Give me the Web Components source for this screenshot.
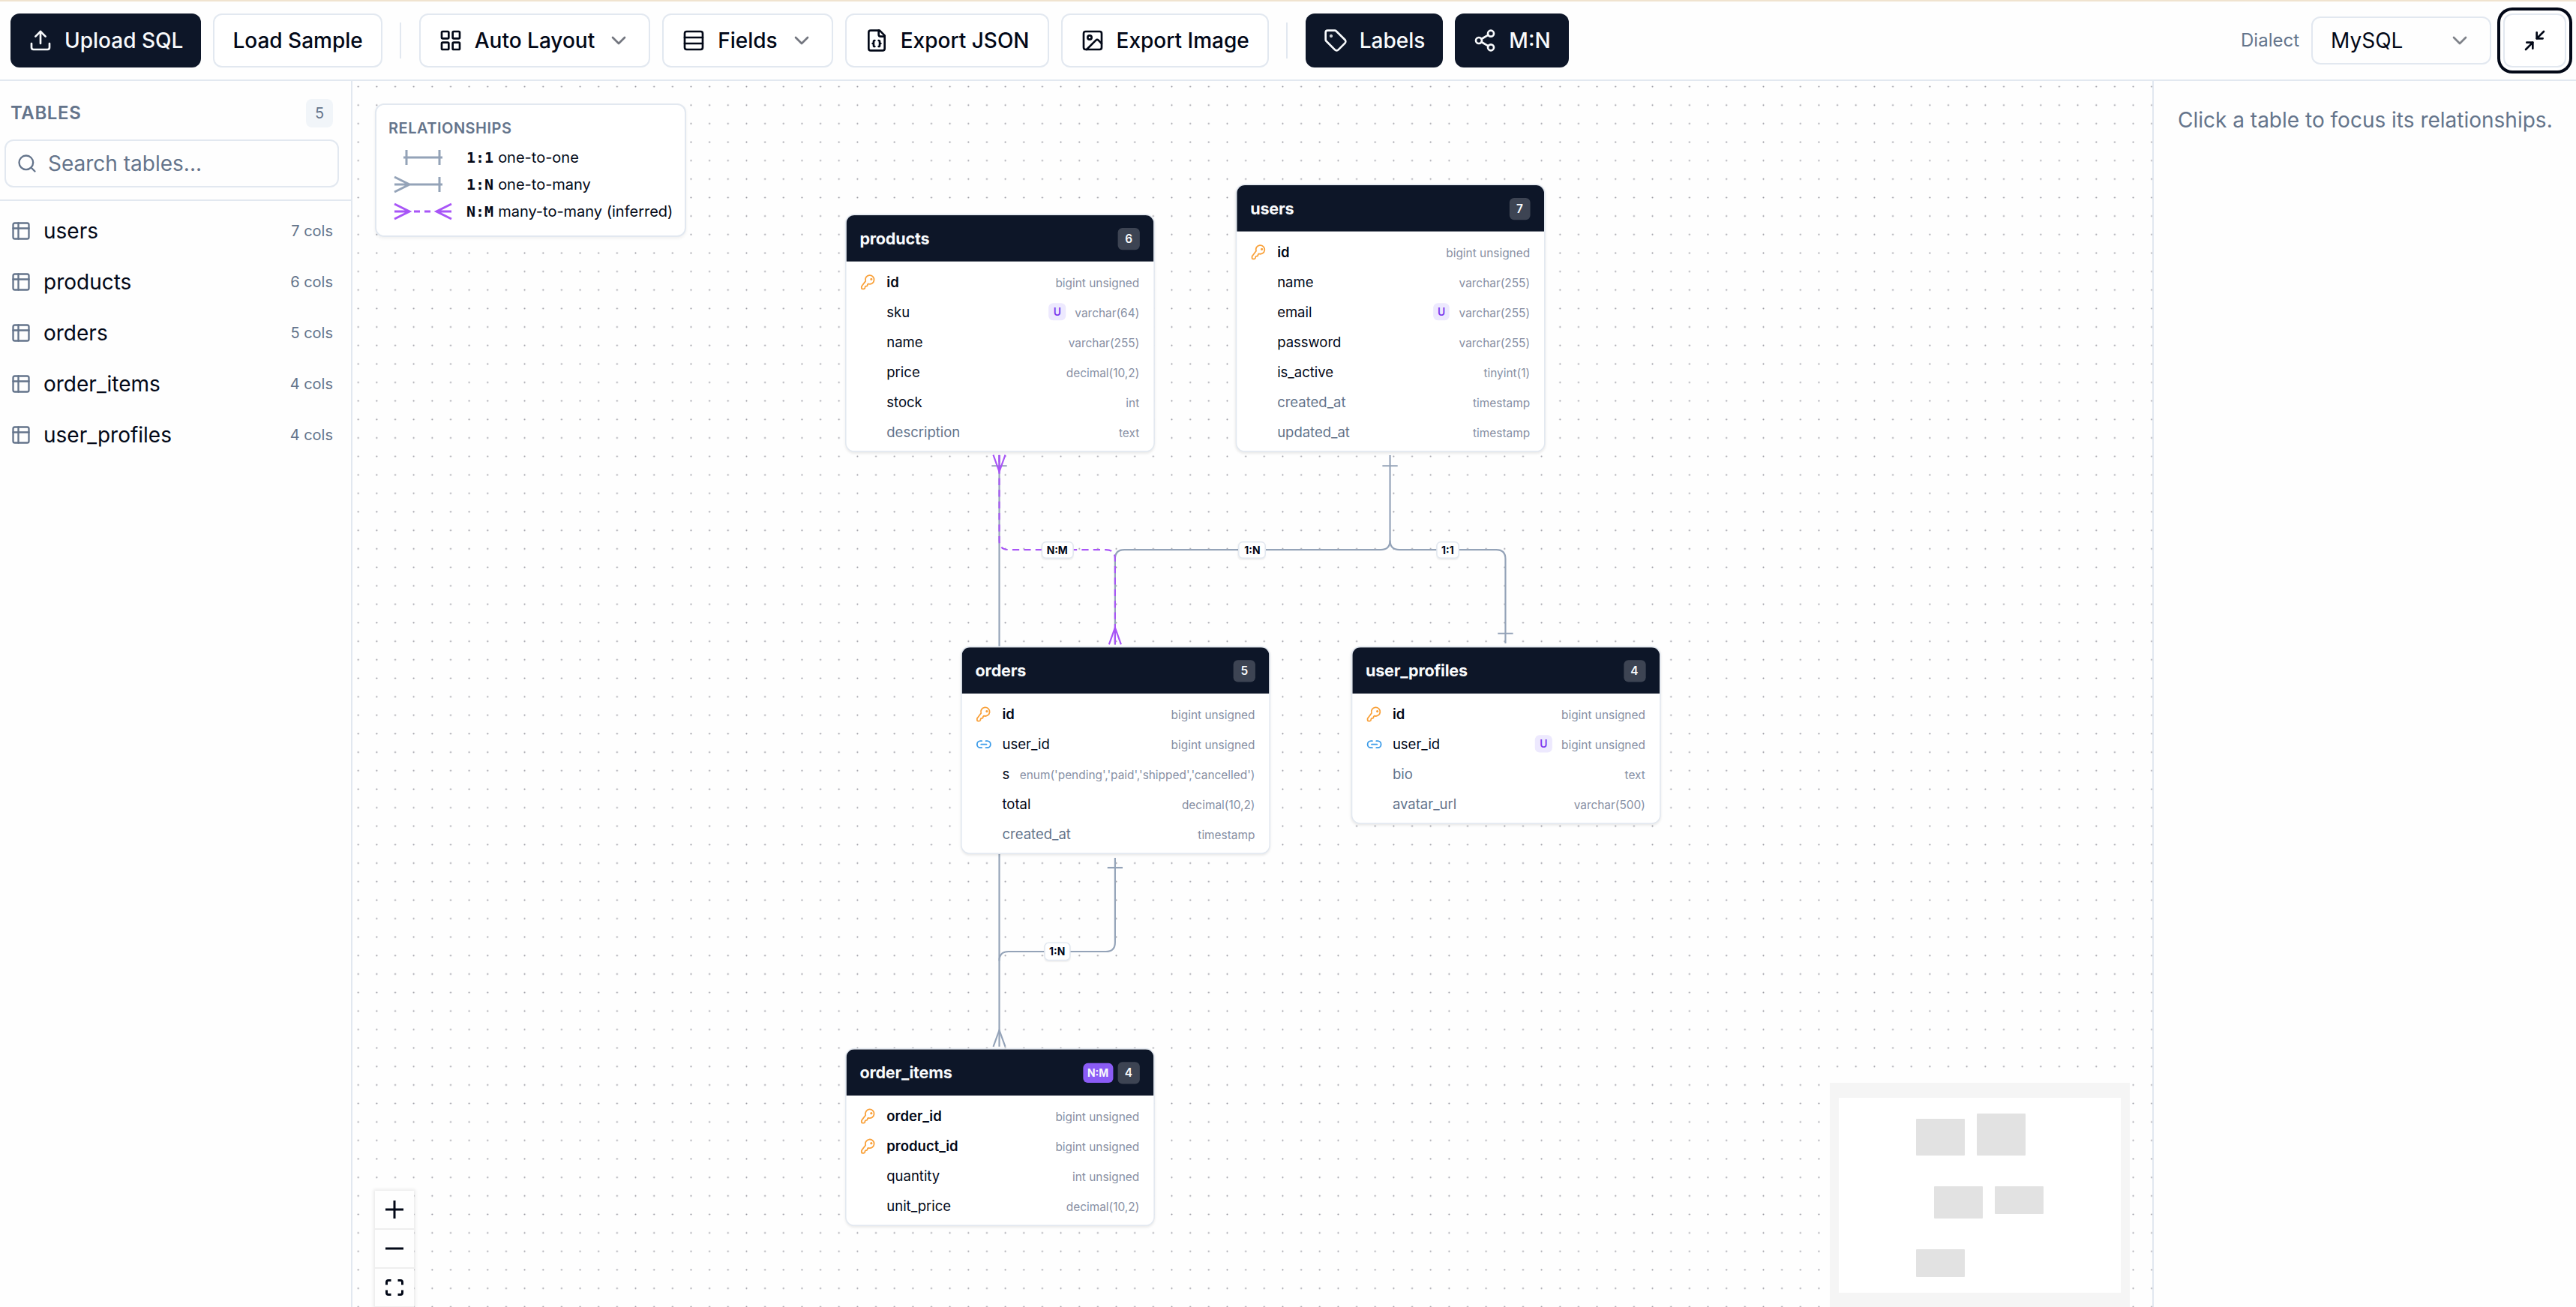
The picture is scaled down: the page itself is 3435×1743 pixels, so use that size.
<!DOCTYPE html>
<html lang="en">
<head>
<meta charset="UTF-8">
<title>SQL Schema Visualizer</title>
<style>
  :root {
    --fg: #020817;
    --muted: #64748b;
    --border: #e2e8f0;
    --primary: #0d1628;
    --edge: #94a3b8;
    --inferred: #a855f7;
  }
  body {
    margin: 0;
    height: 1743px;
    overflow: hidden;
    background: #fefefe;
    color: var(--fg);
    font-family: Inter, "Liberation Sans", sans-serif;
    font-size: 28px;
    line-height: 40px;
  }
</style>
</head>
<body>
<schema-app></schema-app>

<script>
const ICONS = {
  upload: '<path d="M21 15v4a2 2 0 0 1-2 2H5a2 2 0 0 1-2-2v-4"/><path d="m17 8-5-5-5 5"/><path d="M12 3v12"/>',
  grid: '<rect width="7" height="7" x="3" y="3" rx="1"/><rect width="7" height="7" x="14" y="3" rx="1"/><rect width="7" height="7" x="14" y="14" rx="1"/><rect width="7" height="7" x="3" y="14" rx="1"/>',
  rows: '<rect width="18" height="18" x="3" y="3" rx="2"/><path d="M21 9H3"/><path d="M21 15H3"/>',
  json: '<path d="M15 2H6a2 2 0 0 0-2 2v16a2 2 0 0 0 2 2h12a2 2 0 0 0 2-2V7Z"/><path d="M14 2v4a2 2 0 0 0 2 2h4"/><path d="M10 12a1 1 0 0 0-1 1v1a1 1 0 0 1-1 1 1 1 0 0 1 1 1v1a1 1 0 0 0 1 1"/><path d="M14 18a1 1 0 0 0 1-1v-1a1 1 0 0 1 1-1 1 1 0 0 1-1-1v-1a1 1 0 0 0-1-1"/>',
  image: '<rect width="18" height="18" x="3" y="3" rx="2"/><circle cx="9" cy="9" r="2"/><path d="m21 15-3.086-3.086a2 2 0 0 0-2.828 0L6 21"/>',
  tag: '<path d="M12.586 2.586A2 2 0 0 0 11.172 2H4a2 2 0 0 0-2 2v7.172a2 2 0 0 0 .586 1.414l8.704 8.704a2.426 2.426 0 0 0 3.42 0l6.58-6.58a2.426 2.426 0 0 0 0-3.42z"/><circle cx="7.5" cy="7.5" r=".5" fill="currentColor"/>',
  share: '<circle cx="18" cy="5" r="3"/><circle cx="6" cy="12" r="3"/><circle cx="18" cy="19" r="3"/><path d="m8.59 13.51 6.83 3.98"/><path d="m15.41 6.51-6.82 3.98"/>',
  chevron: '<path d="m6 9 6 6 6-6"/>',
  minimize: '<path d="m14 10 7-7"/><path d="M20 10h-6V4"/><path d="m3 21 7-7"/><path d="M4 14h6v6"/>',
  search: '<circle cx="11" cy="11" r="8"/><path d="m21 21-4.3-4.3"/>',
  table: '<path d="M9 3v18"/><rect width="18" height="18" x="3" y="3" rx="2"/><path d="M21 9H3"/>',
  key: '<path d="M2.586 17.414A2 2 0 0 0 2 18.828V20.5a1.5 1.5 0 0 0 1.5 1.5h1.7a2 2 0 0 0 1.8-1.6l.2-1.2a1.6 1.6 0 0 1 1.4-1.3l.8-.1a1.6 1.6 0 0 0 1.4-1.4l.1-.7a1.6 1.6 0 0 1 .7-1.1l.4-.3a6.5 6.5 0 1 0-4-4z"/><circle cx="16.5" cy="7.5" r=".8" fill="currentColor"/>',
  link: '<path d="M9 17H7A5 5 0 0 1 7 7h2"/><path d="M15 7h2a5 5 0 1 1 0 10h-2"/><path d="M8 12h8"/>'
};

const TABLES = [
  { name: 'users', x: 337.7, y: -0.6, cols: [
    ['id', 'bigint unsigned', 'pk'],
    ['name', 'varchar(255)'],
    ['email', 'varchar(255)', 'unique'],
    ['password', 'varchar(255)'],
    ['is_active', 'tinyint(1)'],
    ['created_at', 'timestamp', 'nullable'],
    ['updated_at', 'timestamp', 'nullable']
  ] },
  { name: 'products', x: -0.4, y: 25.4, cols: [
    ['id', 'bigint unsigned', 'pk'],
    ['sku', 'varchar(64)', 'unique'],
    ['name', 'varchar(255)'],
    ['price', 'decimal(10,2)'],
    ['stock', 'int'],
    ['description', 'text', 'nullable']
  ] },
  { name: 'orders', x: 99.7, y: 399.4, cols: [
    ['id', 'bigint unsigned', 'pk'],
    ['user_id', 'bigint unsigned', 'fk'],
    ['s', "enum('pending','paid','shipped','cancelled')"],
    ['total', 'decimal(10,2)'],
    ['created_at', 'timestamp', 'nullable']
  ] },
  { name: 'order_items', x: -0.4, y: 747.3, junction: true, cols: [
    ['order_id', 'bigint unsigned', 'pk'],
    ['product_id', 'bigint unsigned', 'pk'],
    ['quantity', 'int unsigned'],
    ['unit_price', 'decimal(10,2)']
  ] },
  { name: 'user_profiles', x: 437.5, y: 399.4, cols: [
    ['id', 'bigint unsigned', 'pk'],
    ['user_id', 'bigint unsigned', 'fk unique'],
    ['bio', 'text', 'nullable'],
    ['avatar_url', 'varchar(500)', 'nullable']
  ] }
];

class UiIcon extends HTMLElement {
  constructor() {
    super();
    this.attachShadow({ mode: 'open' });
  }

  connectedCallback() {
    const size = this.getAttribute('size') || 32;
    this.shadowRoot.innerHTML = `
      <style>
        :host { display: block; flex: none; width: ${size}px; height: ${size}px; }
        svg { display: block; }
      </style>
      <svg width="${size}" height="${size}" viewBox="0 0 24 24" fill="none" stroke="currentColor" stroke-width="2" stroke-linecap="round" stroke-linejoin="round">${ICONS[this.getAttribute('name')]}</svg>
    `;
  }
}

class UiButton extends HTMLElement {
  constructor() {
    super();
    this.attachShadow({ mode: 'open' });
  }

  connectedCallback() {
    const icon = this.getAttribute('icon');
    this.shadowRoot.innerHTML = `
      <style>
        :host {
          display: flex;
          align-items: center;
          justify-content: center;
          gap: 16px;
          box-sizing: border-box;
          height: 72px;
          padding: 0 24px;
          border: 2px solid var(--border);
          border-radius: 12px;
          background: #fff;
          font-weight: 500;
          white-space: nowrap;
        }
        :host([primary]) {
          border: 0;
          background: var(--primary);
          color: #f8fafc;
        }
        :host([focused]) {
          width: 84px;
          padding: 0;
          box-shadow: 0 0 0 4px #fff, 0 0 0 8px var(--fg);
        }
        .chevron { opacity: 0.55; }
      </style>
      ${icon ? `<ui-icon name="${icon}"></ui-icon>` : ''}
      <slot></slot>
      ${this.hasAttribute('menu') ? '<ui-icon class="chevron" name="chevron"></ui-icon>' : ''}
    `;
  }
}

class AppToolbar extends HTMLElement {
  constructor() {
    super();
    this.attachShadow({ mode: 'open' });
  }

  connectedCallback() {
    this.shadowRoot.innerHTML = `
      <style>
        :host {
          display: flex;
          align-items: center;
          gap: 16px;
          box-sizing: border-box;
          height: 108px;
          padding: 0 13px 0 14px;
          border-top: 2px solid #f0e3cf;
          border-bottom: 2px solid var(--border);
        }
        .sep { width: 2px; height: 48px; margin: 0 7.5px; background: var(--border); }
        .dialect { margin-left: auto; font-size: 24px; color: var(--muted); }
        .select {
          display: flex;
          align-items: center;
          justify-content: space-between;
          box-sizing: border-box;
          width: 240px;
          height: 64px;
          padding: 0 24px;
          border: 2px solid var(--border);
          border-radius: 12px;
        }
        .select ui-icon { opacity: 0.5; }
      </style>
      <ui-button primary icon="upload">Upload SQL</ui-button>
      <ui-button>Load Sample</ui-button>
      <div class="sep"></div>
      <ui-button icon="grid" menu>Auto Layout</ui-button>
      <ui-button icon="rows" menu>Fields</ui-button>
      <ui-button icon="json">Export JSON</ui-button>
      <ui-button icon="image">Export Image</ui-button>
      <div class="sep"></div>
      <ui-button primary icon="tag">Labels</ui-button>
      <ui-button primary icon="share">M:N</ui-button>
      <span class="dialect">Dialect</span>
      <div class="select"><span>MySQL</span><ui-icon name="chevron"></ui-icon></div>
      <ui-button focused icon="minimize"></ui-button>
    `;
  }
}

class TableSidebar extends HTMLElement {
  constructor() {
    super();
    this.attachShadow({ mode: 'open' });
  }

  connectedCallback() {
    this.shadowRoot.innerHTML = `
      <style>
        :host {
          display: block;
          box-sizing: border-box;
          width: 470px;
          border-right: 2px solid var(--border);
        }
        .top {
          box-sizing: border-box;
          height: 160px;
          padding: 24px 16px 0 6px;
          border-bottom: 2px solid var(--border);
        }
        .title {
          display: flex;
          align-items: center;
          justify-content: space-between;
          height: 38px;
          padding: 0 8px;
          font-size: 24px;
          font-weight: 600;
          color: var(--muted);
          letter-spacing: 0.025em;
        }
        .count {
          width: 36px;
          border-radius: 8px;
          background: #f1f5f9;
          font-size: 20px;
          font-weight: 400;
          line-height: 38px;
          text-align: center;
          letter-spacing: 0;
        }
        .search {
          display: flex;
          align-items: center;
          gap: 14px;
          box-sizing: border-box;
          height: 64px;
          margin-top: 16px;
          padding-left: 14px;
          border: 2px solid var(--border);
          border-radius: 12px;
          color: var(--muted);
        }
        .list { padding-top: 6px; }
        .row {
          display: flex;
          align-items: center;
          gap: 16px;
          height: 68px;
          padding: 0 24px 0 14px;
        }
        .row ui-icon { color: var(--muted); }
        .cols { margin-left: auto; font-size: 20px; color: var(--muted); }
      </style>
      <div class="top">
        <div class="title"><span>TABLES</span><span class="count">${TABLES.length}</span></div>
        <div class="search"><ui-icon name="search" size="28"></ui-icon>Search tables...</div>
      </div>
      <div class="list">
        ${['users', 'products', 'orders', 'order_items', 'user_profiles'].map(name => `
          <div class="row">
            <ui-icon name="table" size="28"></ui-icon>
            <span>${name}</span>
            <span class="cols">${TABLES.find(t => t.name === name).cols.length} cols</span>
          </div>
        `).join('')}
      </div>
    `;
  }
}

class TableNode extends HTMLElement {
  constructor() {
    super();
    this.attachShadow({ mode: 'open' });
  }

  connectedCallback() {
    const table = TABLES.find(t => t.name === this.getAttribute('table'));
    this.shadowRoot.innerHTML = `
      <style>
        :host {
          display: block;
          box-sizing: border-box;
          width: 268px;
          border: 1px solid var(--border);
          border-radius: 8px;
          background: #fff;
          box-shadow: 0 1px 2px rgba(0,0,0,0.08);
          overflow: hidden;
          font-size: 12px;
          line-height: 18px;
        }
        header {
          display: flex;
          align-items: center;
          gap: 4px;
          height: 40px;
          padding: 0 12px;
          background: var(--primary);
          color: #f8fafc;
        }
        .name { flex: 1; font-size: 14px; font-weight: 700; letter-spacing: -0.01em; }
        .badge {
          padding: 2px 6px;
          border-radius: 4px;
          background: rgba(255,255,255,0.2);
          font-size: 10px;
          font-weight: 600;
          line-height: 15px;
        }
        .junction {
          padding: 2px 4px;
          border-radius: 4px;
          background: #8b5cf6;
          font-size: 9px;
          font-weight: 700;
          line-height: 13.5px;
        }
        .body { padding: 4.3px 0 3.2px; }
        .col {
          display: flex;
          align-items: center;
          gap: 8px;
          height: 26px;
          padding: 0 12px;
        }
        .icon { width: 14px; flex: none; margin: 0 0.7px 0 0.6px; }
        .pk .icon { color: #f9a13a; }
        .fk .icon { color: #3b9be8; }
        .pk .label { font-weight: 600; }
        .nullable .label { color: var(--muted); }
        .label { flex: 1; }
        .unique-mark {
          padding: 1px 4px;
          border-radius: 4px;
          background: #ede9fe;
          color: #7c3aed;
          font-size: 9px;
          font-weight: 600;
          line-height: 13.5px;
        }
        .type { font-size: 10px; color: #8890a4; white-space: nowrap; }
      </style>
      <header>
        <span class="name">${table.name}</span>
        ${table.junction ? '<span class="junction">N:M</span>' : ''}
        <span class="badge">${table.cols.length}</span>
      </header>
      <div class="body">
        ${table.cols.map(([name, type, flags = '']) => `
          <div class="col ${flags}">
            <span class="icon">${flags.includes('pk') ? '<ui-icon name="key" size="14"></ui-icon>' : flags.includes('fk') ? '<ui-icon name="link" size="14"></ui-icon>' : ''}</span>
            <span class="label">${name}</span>
            ${flags.includes('unique') ? '<span class="unique-mark">U</span>' : ''}
            <span class="type">${type}</span>
          </div>
        `).join('')}
      </div>
    `;
  }
}

class RelationLegend extends HTMLElement {
  constructor() {
    super();
    this.attachShadow({ mode: 'open' });
  }

  connectedCallback() {
    this.shadowRoot.innerHTML = `
      <style>
        :host {
          display: block;
          box-sizing: border-box;
          width: 415px;
          height: 178px;
          padding: 15px 0 0 16px;
          border: 2px solid var(--border);
          border-radius: 12px;
          background: #fff;
          box-shadow: 0 2px 4px rgba(0,0,0,0.06);
          font-size: 20px;
          line-height: 30px;
        }
        h4 {
          margin: 0 0 5px;
          font-size: 20px;
          font-weight: 600;
          line-height: 32px;
          letter-spacing: 0.025em;
          color: var(--muted);
        }
        .row { display: flex; align-items: center; height: 36px; white-space: nowrap; }
        svg { flex: none; margin-right: 8px; }
        b { font-family: "DejaVu Sans Mono", monospace; font-size: 20px; margin-right: 6px; }
      </style>
      <h4>RELATIONSHIPS</h4>
      <div class="row">
        <svg width="96" height="24" fill="none" stroke="var(--edge)" stroke-width="3"><path d="M20 12H72M24 2V22M68 2V22"/></svg>
        <b>1:1</b><span>one-to-one</span>
      </div>
      <div class="row">
        <svg width="96" height="24" fill="none" stroke="var(--edge)" stroke-width="3"><path d="M8 12H72M8 2 28 12 8 22M68 2V22"/></svg>
        <b>1:N</b><span>one-to-many</span>
      </div>
      <div class="row">
        <svg width="96" height="24" fill="none" stroke="var(--inferred)" stroke-width="3"><path d="M8 12H28M8 2 28 12 8 22M84 12H64M84 2 64 12 84 22"/><path d="M34 12H42M48 12H56"/></svg>
        <b>N:M</b><span>many-to-many (inferred)</span>
      </div>
    `;
  }
}

class CanvasControls extends HTMLElement {
  constructor() {
    super();
    this.attachShadow({ mode: 'open' });
  }

  connectedCallback() {
    this.shadowRoot.innerHTML = `
      <style>
        :host { display: block; box-shadow: 0 0 4px 2px rgba(0,0,0,0.08); }
        div {
          display: flex;
          align-items: center;
          justify-content: center;
          width: 52px;
          height: 50px;
          border-bottom: 2px solid #eee;
          background: #fefefe;
        }
      </style>
      <div><svg width="24" height="24"><path d="M12 0V24M0 12H24" stroke="var(--fg)" stroke-width="3"/></svg></div>
      <div><svg width="24" height="4"><path d="M0 2H24" stroke="var(--fg)" stroke-width="3"/></svg></div>
      <div><svg width="24" height="22" fill="none" stroke="var(--fg)" stroke-width="3"><path d="M1.5 7.5V4Q1.5 1.5 4 1.5H7.5M16.5 1.5H20Q22.5 1.5 22.5 4V7.5M22.5 14.5V18Q22.5 20.5 20 20.5H16.5M7.5 20.5H4Q1.5 20.5 1.5 18V14.5"/></svg></div>
    `;
  }
}

class MiniMap extends HTMLElement {
  constructor() {
    super();
    this.attachShadow({ mode: 'open' });
  }

  connectedCallback() {
    this.shadowRoot.innerHTML = `
      <style>
        :host { display: block; width: 400px; height: 300px; }
        svg { display: block; }
      </style>
      <svg width="400" height="300">
        <rect width="400" height="300" fill="#f5f5f5"/>
        <rect x="12" y="20" width="376" height="260" fill="#fff"/>
        <g fill="#e2e2e2">
          <rect x="115" y="48" width="65" height="49" rx="1"/>
          <rect x="196" y="41" width="65" height="56" rx="1"/>
          <rect x="139" y="138" width="65" height="43" rx="1"/>
          <rect x="220" y="138" width="65" height="37" rx="1"/>
          <rect x="115" y="222" width="65" height="37" rx="1"/>
        </g>
      </svg>
    `;
  }
}

class SchemaCanvas extends HTMLElement {
  constructor() {
    super();
    this.attachShadow({ mode: 'open' });
  }

  connectedCallback() {
    this.shadowRoot.innerHTML = `
      <style>
        :host { display: block; position: relative; overflow: hidden; }
        .dots { position: absolute; inset: 0; width: 100%; height: 100%; }
        /* pan and zoom of the diagram */
        .viewport {
          position: absolute;
          left: 0;
          top: 0;
          transform: translate(657px, 139px) scale(1.5406);
          transform-origin: 0 0;
        }
        .edges { position: absolute; left: 0; top: 0; overflow: visible; }
        table-node { position: absolute; }
        .label {
          position: absolute;
          box-sizing: border-box;
          height: 15.4px;
          padding: 0 4px;
          border: 1px solid var(--border);
          border-radius: 4px;
          background: #fff;
          box-shadow: 0 1px 1px rgba(0,0,0,0.06);
          transform: translate(-50%, -50%);
          font-size: 9px;
          font-weight: 700;
          line-height: 13.4px;
        }
        relation-legend { position: absolute; left: 30px; top: 30px; }
        canvas-controls { position: absolute; left: 30px; bottom: 30px; }
        mini-map { position: absolute; right: 30px; bottom: 30px; }
      </style>
      <svg class="dots">
        <pattern id="dots" x="-4.6" y="-4.8" width="24.655" height="24.655" patternUnits="userSpaceOnUse">
          <circle cx="12.3" cy="12.3" r="1" fill="#91919a"/>
        </pattern>
        <rect width="100%" height="100%" fill="url(#dots)"/>
      </svg>
      <div class="viewport">
        <svg class="edges" width="1" height="1" fill="none" stroke="var(--edge)" stroke-width="1.4">
          <path d="M133.4 233.7V745.7M126.8 242.9H140"/>
          <path d="M471.6 233.7V307.5Q471.6 315.5 463.6 315.5H241.6Q233.6 315.5 233.6 323.5V397.5M465 242.9H478.2"/>
          <path d="M471.6 307.5Q471.6 315.5 479.6 315.5H563.5Q571.5 315.5 571.5 323.5V396.6M564.9 388H578.1"/>
          <path d="M233.6 582.2V655.4Q233.6 663.4 225.6 663.4H141.4Q133.4 663.4 133.4 671.4M227 590.8H240.2"/>
          <path d="M128.2 745.7 133.4 731.5 138.6 745.7"/>
          <g stroke="var(--inferred)">
            <path d="M133.4 233.7V307.5Q133.4 315.5 141.4 315.5H225.6Q233.6 315.5 233.6 323.5V397.5" stroke-dasharray="6 4"/>
            <path d="M133.4 233.5V248M128.2 233.5 133.4 248 138.6 233.5"/>
            <path d="M233.6 397.5V383M228.4 397.5 233.6 383 238.8 397.5"/>
          </g>
        </svg>
        <div class="label" style="left: 183.5px; top: 315.5px">N:M</div>
        <div class="label" style="left: 352.4px; top: 315.5px">1:N</div>
        <div class="label" style="left: 521.5px; top: 315.5px">1:1</div>
        <div class="label" style="left: 183.5px; top: 663.4px">1:N</div>
        ${TABLES.map(t => `<table-node table="${t.name}" style="left: ${t.x}px; top: ${t.y}px"></table-node>`).join('')}
      </div>
      <relation-legend></relation-legend>
      <canvas-controls></canvas-controls>
      <mini-map></mini-map>
    `;
  }
}

class SchemaApp extends HTMLElement {
  constructor() {
    super();
    this.attachShadow({ mode: 'open' });
  }

  connectedCallback() {
    this.shadowRoot.innerHTML = `
      <style>
        :host {
          display: grid;
          grid-template-rows: 108px 1fr;
          width: 3435px;
          height: 1774px;
        }
        main { display: grid; grid-template-columns: 470px 1fr 565px; }
        aside {
          padding: 32px 0 0 32px;
          border-left: 2px solid var(--border);
          color: var(--muted);
        }
      </style>
      <app-toolbar></app-toolbar>
      <main>
        <table-sidebar></table-sidebar>
        <schema-canvas></schema-canvas>
        <aside>Click a table to focus its relationships.</aside>
      </main>
    `;
  }
}

customElements.define('ui-icon', UiIcon);
customElements.define('ui-button', UiButton);
customElements.define('app-toolbar', AppToolbar);
customElements.define('table-sidebar', TableSidebar);
customElements.define('table-node', TableNode);
customElements.define('relation-legend', RelationLegend);
customElements.define('canvas-controls', CanvasControls);
customElements.define('mini-map', MiniMap);
customElements.define('schema-canvas', SchemaCanvas);
customElements.define('schema-app', SchemaApp);
</script>
</body>
</html>
